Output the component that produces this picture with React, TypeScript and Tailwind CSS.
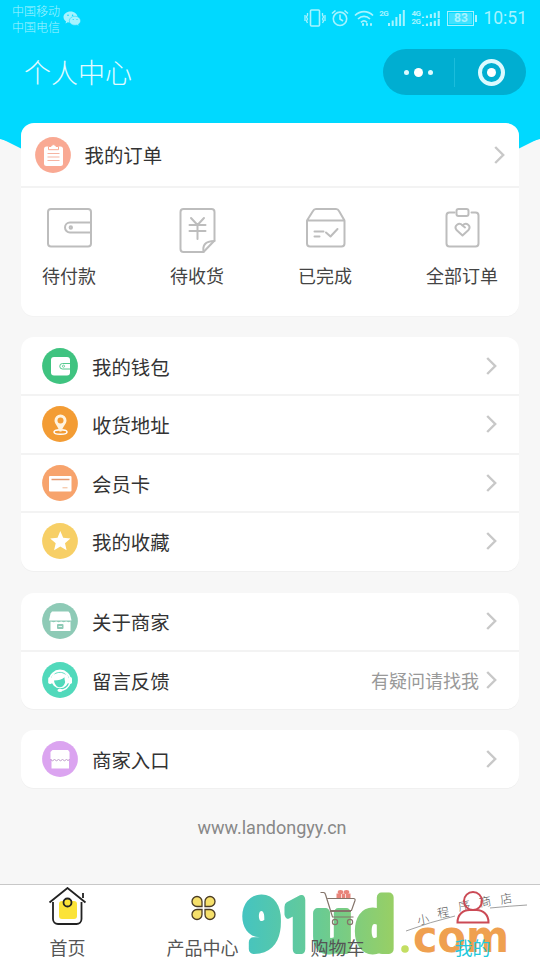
import React from 'react';
import { clsx } from 'clsx';

// ── Status bar ──────────────────────────────────────────────────────────────
function SignalBars({ className }: { className?: string }) {
    return (
        <svg viewBox="0 0 17 16" preserveAspectRatio="none" className={className} fill="currentColor">
            <rect x="0" y="13" width="2" height="3" />
            <rect x="3.7" y="10.5" width="2" height="5.5" />
            <rect x="7.4" y="7" width="2" height="9" />
            <rect x="11.1" y="4" width="2" height="12" />
            <rect x="14.8" y="0" width="2" height="16" />
        </svg>
    );
}

function StatusBar() {
    return (
        <div className="flex h-[38px] items-start justify-between pl-3 pr-[13px] text-[#a6f3ff]">
            <div className="flex">
                <div className="pt-[3px] text-[12px] font-light leading-[16px]">
                    <div>中国移动</div>
                    <div>中国电信</div>
                </div>
                <svg viewBox="0 0 18 16" className="ml-[3px] mt-[11px] h-4 w-[18px]">
                    <path d="M7.5 0.5C3.6.5.5 3 .5 6.1c0 1.8 1 3.3 2.6 4.3l-.6 2 2.3-1.2c.8.2 1.7.4 2.7.4 3.9 0 7-2.5 7-5.5S11.4.5 7.5.5z" fill="currentColor" />
                    <path d="M12 5.2c-3.2 0-5.7 2-5.7 4.6 0 2.5 2.5 4.5 5.7 4.5.7 0 1.4-.1 2-.3l1.9 1-.5-1.7c1.3-.8 2.2-2.1 2.2-3.5 0-2.6-2.5-4.6-5.6-4.6z" fill="currentColor" stroke="#00d9ff" strokeWidth=".5" />
                    <g fill="#00d9ff">
                        <circle cx="5" cy="4.3" r=".8" />
                        <circle cx="9.6" cy="4.3" r=".8" />
                        <circle cx="10.2" cy="8.5" r=".6" />
                        <circle cx="14" cy="8.5" r=".6" />
                    </g>
                </svg>
            </div>
            <div className="flex h-[36px] items-center font-[Roboto,sans-serif]">
                <svg viewBox="0 0 22 18" className="h-[18px] w-[22px]" fill="none" stroke="currentColor" strokeWidth="1.6">
                    <rect x="6.5" y="1" width="9" height="16" rx="1" />
                    <path d="M3.5 4v2L2.5 8l1 2-1 2 1 2M1 6v6M18.5 4v2l1 2-1 2 1 2-1 2M21 6v6" strokeWidth="1.3" />
                </svg>
                <svg viewBox="0 0 18 18" className="ml-[5px] h-[18px] w-[18px]" fill="none" stroke="currentColor" strokeWidth="1.6">
                    <circle cx="9" cy="9.8" r="6.7" />
                    <path d="M9 5.5v4.5l3 2M1 4.5L4.5 1.5M17 4.5l-3.5-3" />
                </svg>
                <svg viewBox="0 0 20 17" className="ml-[5px] h-[17px] w-5" fill="none" stroke="currentColor" strokeWidth="1.7">
                    <path d="M1 5.5c5.2-5.2 12.8-5.2 18 0M4 9c3.5-3.5 8.5-3.5 12 0M7 12.3c1.8-1.7 4.2-1.7 6 0" />
                    <path d="M8 14.5h2M12 14.5h2M16 14.5h2" strokeWidth="2.4" />
                </svg>
                <div className="ml-[5px] flex">
                    <span className="text-[8px] font-bold leading-[8px] tracking-tighter">2G</span>
                    <SignalBars className="h-4 w-[17px]" />
                </div>
                <div className="ml-[6px] flex flex-col text-[8px] font-bold leading-[8px] tracking-tighter">
                    {['4G', '2G'].map((net) => (
                        <div key={net} className="flex items-center">
                            <span className="w-[11px]">{net}</span>
                            <SignalBars className="h-[7px] w-[18px]" />
                        </div>
                    ))}
                </div>
                <div className="ml-[7px] flex h-[15px] w-[27px] items-center justify-center border border-current p-px">
                    <span className="flex h-full w-full items-center justify-center bg-[#3fe2ff] text-[12px] font-bold leading-none">83</span>
                </div>
                <span className="ml-px h-[7px] w-[2px] bg-current" />
                <span className="ml-[6px] pt-[2px] text-[17.5px] leading-none">10:51</span>
            </div>
        </div>
    );
}

// ── Header ──────────────────────────────────────────────────────────────────
function Header() {
    return (
        <header className="relative h-[123px] shrink-0 bg-[#00d9ff]">
            <svg viewBox="0 0 540 60" className="absolute left-0 top-[122px] h-[60px] w-full" fill="#00d9ff">
                <path d="M0 0H540V17Q270 96 0 17Z" />
                <path d="M0 16L24 28H516L540 16Z" />
            </svg>
            <StatusBar />
            <div className="flex items-center justify-between pl-6 pr-[14px] pt-[11px]">
                <h1 className="text-[27px] font-light leading-[46px] text-[#e4fbff]">个人中心</h1>
                <div className="flex h-[46px] w-[143px] items-center rounded-full bg-[#00aed1] text-white">
                    <div className="flex flex-1 items-center justify-center gap-[5px]">
                        <span className="h-[5px] w-[5px] rounded-full bg-[#dcfaff]" />
                        <span className="h-[9px] w-[9px] rounded-full bg-white" />
                        <span className="h-[5px] w-[5px] rounded-full bg-[#dcfaff]" />
                    </div>
                    <span className="h-[29px] w-px bg-[#1bbddc]" />
                    <div className="flex flex-1 items-center justify-center">
                        <div className="ml-0.5 flex h-[27px] w-[27px] items-center justify-center rounded-full border-4 border-[#dcfaff]">
                            <span className="h-[9px] w-[9px] rounded-full bg-white" />
                        </div>
                    </div>
                </div>
            </div>
        </header>
    );
}

// ── Shared pieces ───────────────────────────────────────────────────────────
function Chevron() {
    return (
        <svg viewBox="0 0 11 18" className="h-[18px] w-[11px]" fill="none" stroke="#c8c8c8" strokeWidth="2.4">
            <path d="M1.2 1L9.2 9l-8 8" />
        </svg>
    );
}

function RoundIcon({ color, children }: { color: string; children: React.ReactNode }) {
    return (
        <svg viewBox="0 0 36 36" className="h-9 w-9 shrink-0">
            <circle cx="18" cy="18" r="17.9" fill={color} />
            {children}
        </svg>
    );
}

const icons = {
    order: (
        <RoundIcon color="#f9a993">
            <rect x="9" y="9.5" width="19" height="19.5" rx="2.5" fill="#fff" />
            <path d="M13.5 12.7V9.5h2.5a2.6 2.6 0 015 0h2.5v3.2z" fill="#fff" stroke="#f9a993" strokeWidth="1" />
            <path d="M12.5 16.5h12M12.5 20h12M12.5 23.5h12" stroke="#f6b4a2" strokeWidth="1.2" />
        </RoundIcon>
    ),
    wallet: (
        <RoundIcon color="#3fc380">
            <rect x="9" y="9" width="19" height="18.5" rx="3" fill="#fff" />
            <path d="M28 15.5h-7.5a2.7 2.7 0 000 5.5H28" fill="none" stroke="#3fc380" strokeWidth=".9" />
            <circle cx="21.5" cy="18.2" r="1.1" fill="none" stroke="#3fc380" strokeWidth=".7" />
        </RoundIcon>
    ),
    address: (
        <RoundIcon color="#f39c34">
            <ellipse cx="18.5" cy="26" rx="6.5" ry="2.3" fill="none" stroke="#fff" strokeWidth="1.5" />
            <path d="M18.5 8.5a6 6 0 00-6 6c0 3.5 3.5 5.5 5 11h2c1.5-5.5 5-7.5 5-11a6 6 0 00-6-6z" fill="#fff3df" />
            <circle cx="18.5" cy="14.5" r="3" fill="#f39c34" />
        </RoundIcon>
    ),
    card: (
        <RoundIcon color="#f7a36c">
            <rect x="7" y="11" width="22.5" height="15.5" rx="1" fill="#fff" />
            <path d="M9.5 14.5h18" stroke="#e59a70" strokeWidth="1.5" />
            <path d="M20.5 22.8h5" stroke="#f2b890" strokeWidth="1" />
        </RoundIcon>
    ),
    star: (
        <RoundIcon color="#f7cf66">
            <path d="M18.3 8l2.9 6.7 7.2.7-5.4 4.8 1.6 7.1-6.3-3.7-6.2 3.7 1.6-7.1-5.5-4.8 7.3-.7z" fill="#fff" />
        </RoundIcon>
    ),
    shop: (
        <RoundIcon color="#8ecab6">
            <path d="M10 8.5h16.5l1.5 2 1.5 7H7l1.5-7z" fill="#fff" />
            <path d="M8.5 18.5V28h20v-9.5l-1.8.8-2.5-.8-2.5.8-2.5-.8-2.5.8-2.5-.8-2.5.8z" fill="#fff" />
            <rect x="15" y="21" width="6.5" height="5" rx="1" fill="#8ecab6" />
            <path d="M16.5 23.5h3.5" stroke="#fff" strokeWidth=".8" />
        </RoundIcon>
    ),
    service: (
        <RoundIcon color="#51d9bb">
            <path d="M8 18a10 9.5 0 0120 0" fill="none" stroke="#fff" strokeWidth="1.8" />
            <circle cx="18" cy="17.5" r="8.7" fill="#fff" />
            <rect x="6.2" y="15" width="4" height="7" rx="1.8" fill="#fff" />
            <rect x="26" y="15" width="4" height="7" rx="1.8" fill="#fff" />
            <path d="M12 18.5c4.5 0 8-.8 10.5-3.2 0 4 1 3.5.5 5.5-1 3-3 4.5-5.2 4.5-3 0-5.3-3-5.8-6.8z" fill="#51d9bb" />
            <path d="M12.5 12c3.5-2.2 8-2.2 11 .3" fill="none" stroke="#51d9bb" strokeWidth=".9" />
            <path d="M28 21c-1.5 4.5-4.5 7-10 7.5" fill="none" stroke="#fff" strokeWidth="1.5" />
            <ellipse cx="18" cy="28.3" rx="2.6" ry="1.6" fill="#fff" />
        </RoundIcon>
    ),
    entrance: (
        <RoundIcon color="#dba4f0">
            <path d="M10.5 9H26l1.5 2v7h-19v-7z" fill="#fff" />
            <path d="M9.5 18H27v9.5H9.5z" fill="#fff" />
            <path d="M8.5 18.5q2 2.5 4 0q2 2.5 4 0q2 2.5 4 0q2 2.5 4 0q1.5 2 3 0" fill="none" stroke="#bd9bc9" strokeWidth="1" />
        </RoundIcon>
    ),
};

interface MenuItem {
    label: string;
    icon: React.ReactNode;
    hint?: string;
}

function MenuCard({ items, className }: { items: MenuItem[]; className?: string }) {
    return (
        <section className={clsx('rounded-[13px] bg-white pb-px shadow-[0_1px_0_#f0f0f0]', className)}>
            {items.map((item, i) => (
                <div
                    key={item.label}
                    className={clsx('flex items-center pl-[21px] pr-[22px]', i > 0 ? 'h-[58.5px] border-t-2 border-[#f3f3f3]' : 'h-[57px]')}
                >
                    {item.icon}
                    <span className="ml-[14px] pt-[2px] text-[19.4px] leading-[28px] text-[#333]">{item.label}</span>
                    <span className="ml-auto mr-[7px] text-[18px] leading-[28px] text-[#999]">{item.hint}</span>
                    <Chevron />
                </div>
            ))}
        </section>
    );
}

// ── Orders ──────────────────────────────────────────────────────────────────
const orderTabs = [
    {
        label: '待付款',
        icon: (
            <>
                <rect x="1" y="5" width="43" height="37.5" rx="3" />
                <path d="M44 18.5H23a5 5 0 000 10h21" />
                <circle cx="23.8" cy="23.5" r="1.2" />
            </>
        ),
    },
    {
        label: '待收货',
        icon: (
            <>
                <path d="M8.5 5h28a3 3 0 013 3v28.5L28.5 48h-20a3 3 0 01-3-3V8a3 3 0 013-3z" />
                <path d="M28.5 48c-1-6 1-11 11-11" />
                <path d="M16 14l6.5 7 6.5-7M14.5 21h16M14.5 27h16M22.5 21v14" />
            </>
        ),
    },
    {
        label: '已完成',
        icon: (
            <>
                <path d="M4 16.5v23a3 3 0 003 3h31.5a3 3 0 003-3v-23zL10 7q1-2 3-2h20q2 0 3 2l5.5 9.5" />
                <path d="M11.5 27.5h9M11.5 32.5h5M23 28.5l4.5 4 7-7.5" />
            </>
        ),
    },
    {
        label: '全部订单',
        icon: (
            <>
                <path d="M14.5 8.5h-5a3 3 0 00-3 3v28a3 3 0 003 3h26a3 3 0 003-3v-28a3 3 0 00-3-3h-4" />
                <rect x="16.5" y="5" width="12" height="7" rx="2" />
                <path d="M22.5 31.5l-6-5.5c-3-4 2.5-8.5 6-4.5l2.5 2M22.5 21.5c4-4 9 .5 6 4.5l-6 5.5" />
            </>
        ),
    },
];

function OrderCard() {
    return (
        <section className="relative h-[193px] rounded-[13px] bg-white shadow-[0_1px_0_#f3f3f3]">
            <div className="flex h-[65px] items-center border-b-2 border-[#f3f3f3] pl-[13.5px] pr-[14px]">
                {icons.order}
                <span className="ml-[14px] pt-px text-[19.4px] leading-[28px] text-[#333]">我的订单</span>
                <span className="ml-auto">
                    <Chevron />
                </span>
            </div>
            <div className="flex justify-between px-[21px] pt-[16px]">
                {orderTabs.map((tab) => (
                    <div key={tab.label} className="flex flex-col items-center">
                        <svg viewBox="0 0 45 50" className="h-[50px] w-[45px]" fill="none" stroke="#bdbdbd" strokeWidth="2" strokeLinejoin="round" strokeLinecap="round">
                            {tab.icon}
                        </svg>
                        <span className="mt-[8px] text-[18px] leading-[26px] text-[#444]">{tab.label}</span>
                    </div>
                ))}
            </div>
        </section>
    );
}

// ── Bottom tabs ─────────────────────────────────────────────────────────────
const navTabs = [
    {
        label: '首页',
        icon: (
            <>
                <rect x="12" y="14" width="18" height="18" rx="3" fill="#fbe338" />
                <path d="M6 15v17a5 5 0 005 5h18.5a5 5 0 005-5V15M2.5 15.5L20.5 1l18 14.5M36 6v5" fill="none" stroke="#222" strokeWidth="1.8" />
                <circle cx="20.5" cy="15.5" r="4" fill="#fbe338" stroke="#222" strokeWidth="1.8" />
            </>
        ),
    },
    {
        label: '产品中心',
        icon: (
            <g fill="#f6e06b" stroke="#4a3b24" strokeWidth="1.3">
                <path d="M20 19.5h-5a5 5 0 115-5z" />
                <path d="M23 19.5h5a5 5 0 10-5-5z" />
                <path d="M20 22.5h-5a5 5 0 105 5z" />
                <path d="M23 22.5h5a5 5 0 11-5 5z" />
            </g>
        ),
    },
    {
        label: '购物车',
        icon: (
            <>
                <g fill="none" stroke="#84746a" strokeWidth="1.2">
                    <path d="M3.5 5.5h3q1.5 0 2 2l7 22.5h21M10.5 11.500h26q2 0 1.5 2l-3.5 10H14M13 24.500h21" />
                    <circle cx="18" cy="35" r="2.6" />
                    <circle cx="33" cy="35" r="2.6" />
                </g>
                <g fill="#e9857b">
                    <rect x="19.5" y="6.5" width="14" height="4.5" />
                    <ellipse cx="23.5" cy="5" rx="2.8" ry="2" />
                    <ellipse cx="29.5" cy="5" rx="2.8" ry="2" />
                </g>
                <path d="M24.5 7v4M28.5 7v4" stroke="#fff" strokeWidth=".7" />
            </>
        ),
    },
    {
        label: '我的',
        active: true,
        icon: (
            <g fill="none" stroke="#cb4a55" strokeWidth="2">
                <circle cx="21" cy="14" r="9" />
                <path d="M5.5 35.500c0-8 5.500-12.500 12-12.500h7c6.500 0 12 4.500 12 12.500z" />
            </g>
        ),
    },
];

// Site stamp laid over the tab bar
function Watermark() {
    const word = [
        { ch: '9', x: 244, w: 36 },
        { ch: '1', x: 284, w: 27 },
        { ch: 'u', x: 314, w: 36 },
        { ch: 'd', x: 357, w: 36 },
    ];
    const script = [
        { ch: '小', x: 418, y: 925 },
        { ch: '程', x: 438, y: 918 },
        { ch: '序', x: 459, y: 911 },
        { ch: '商', x: 480, y: 907 },
        { ch: '店', x: 501, y: 904 },
    ];
    return (
        <svg viewBox="0 885 540 75" className="pointer-events-none absolute inset-x-0 top-0 h-[75px] w-full">
            <defs>
                <linearGradient id="stamp" gradientUnits="userSpaceOnUse" x1="243" y1="0" x2="393" y2="0">
                    <stop offset="0" stopColor="#45c4c0" />
                    <stop offset=".5" stopColor="#68cb94" />
                    <stop offset="1" stopColor="#98cf65" />
                </linearGradient>
            </defs>
            <g fill="url(#stamp)" stroke="url(#stamp)" strokeWidth="10" strokeLinejoin="round" fontFamily="Roboto" fontWeight="500" fontSize="69">
                {word.map((l) => (
                    <text key={l.ch} x={l.x} y="948.5" textLength={l.w} lengthAdjust="spacingAndGlyphs">
                        {l.ch}
                    </text>
                ))}
            </g>
            <circle cx="405" cy="949" r="3.8" fill="#c3de62" />
            <text x="413" y="952" fill="#efa050" fontFamily="DejaVu Sans" fontWeight="700" fontSize="45" textLength="96" lengthAdjust="spacingAndGlyphs">com</text>
            <g fill="#555" fontFamily="Noto Sans CJK SC" fontWeight="300" fontSize="12">
                {script.map((l) => (
                    <text key={l.ch} x={l.x} y={l.y} transform={`rotate(-10 ${l.x} ${l.y})`}>
                        {l.ch}
                    </text>
                ))}
            </g>
            <path d="M406 931Q430 922 455 916M490 908Q510 906 527 905" fill="none" stroke="#888" strokeWidth=".8" />
        </svg>
    );
}

function TabBar() {
    return (
        <nav className="relative mt-auto h-[76px] shrink-0 border-t border-[#c8c8c8] bg-white">
            <Watermark />
            <div className="relative grid grid-cols-4">
                {navTabs.map((tab) => (
                    <div key={tab.label} className="flex flex-col items-center pt-[2px]">
                        <svg viewBox="0 0 42 40" className="h-10 w-[42px]">
                            {tab.icon}
                        </svg>
                        <span className={clsx('mt-[7px] text-[18px] leading-[26px]', tab.active ? 'text-[#24c8dc]' : 'text-[#555]')}>{tab.label}</span>
                    </div>
                ))}
            </div>
        </nav>
    );
}

export default function App() {
    return (
        <div className="flex h-[960px] w-[540px] flex-col overflow-hidden bg-[#f7f7f7] font-['Noto_Sans_CJK_SC',sans-serif]">
            <Header />
            <main className="relative px-[21px]">
                <OrderCard />
                <MenuCard
                    className="mt-[21px]"
                    items={[
                        { label: '我的钱包', icon: icons.wallet },
                        { label: '收货地址', icon: icons.address },
                        { label: '会员卡', icon: icons.card },
                        { label: '我的收藏', icon: icons.star },
                    ]}
                />
                <MenuCard
                    className="mt-[22px]"
                    items={[
                        { label: '关于商家', icon: icons.shop },
                        { label: '留言反馈', icon: icons.service, hint: '有疑问请找我' },
                    ]}
                />
                <MenuCard className="mt-[21px]" items={[{ label: '商家入口', icon: icons.entrance }]} />
                <p className="mt-[27px] pl-1 text-center font-[Roboto,sans-serif] text-[18px] leading-[26px] text-[#888]">www.landongyy.cn</p>
            </main>
            <TabBar />
        </div>
    );
}
